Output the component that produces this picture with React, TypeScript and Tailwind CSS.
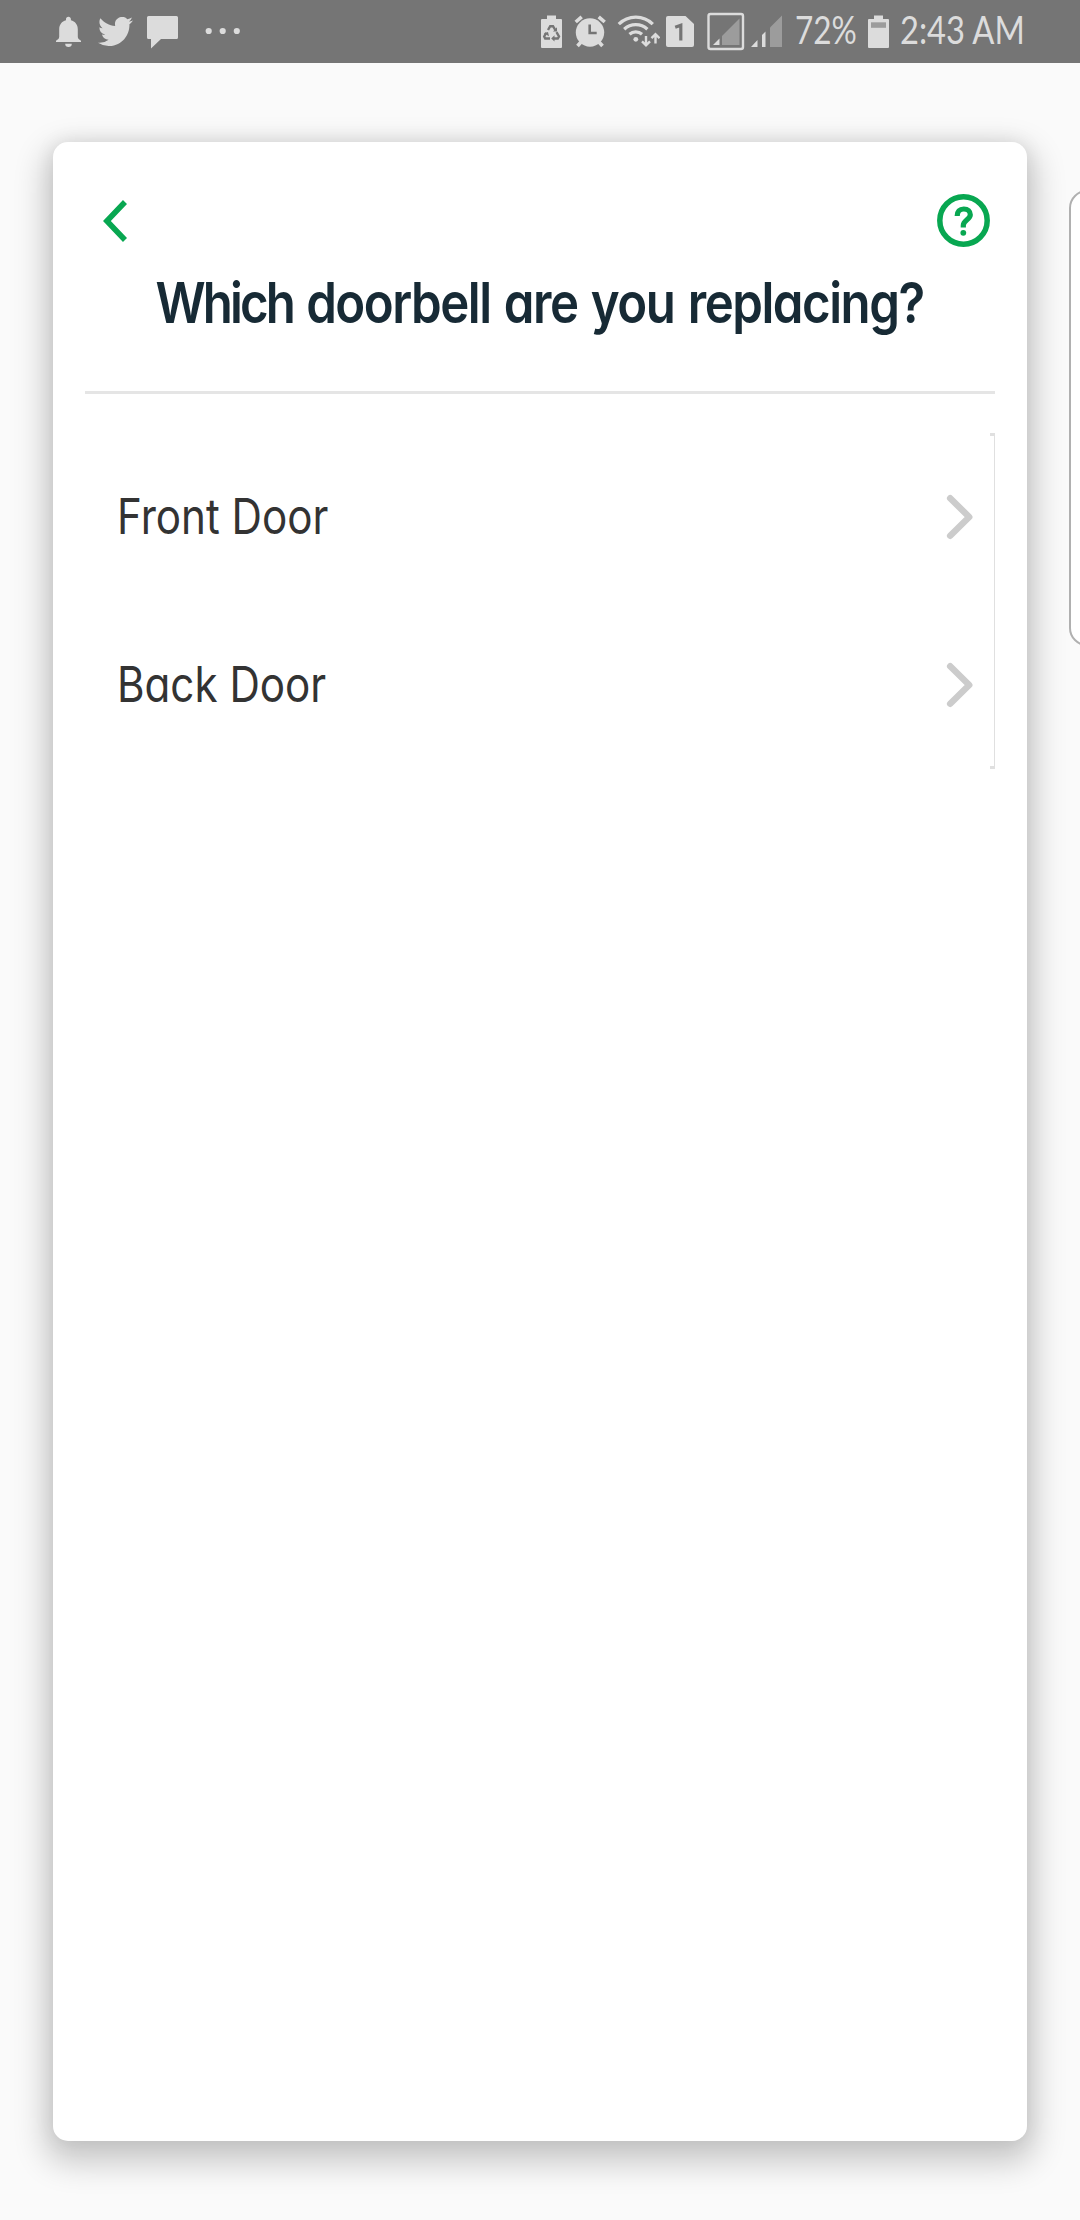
const INTER = "font-['Inter','Liberation_Sans',sans-serif] [font-feature-settings:'cv11']";
const LATO = "font-['Lato','Liberation_Sans',sans-serif]";

function StatusBar() {
  return (
    <header className={`flex h-[63px] w-full items-center bg-[#757575] pl-[56px] text-[#dcdcdc] ${LATO}`}>
      <svg className="h-[63px] w-[25px] shrink-0" viewBox="56 0 25 63" fill="currentColor">
        <path d="M68.400 16.800c-1.500 0-2.400 1-2.400 2.300v1.200c-4.200 1-6.800 4.400-6.800 9v7.500c0 1.600-1.200 2.800-3.200 3.900V42h25v-1.300c-2-1.100-3.200-2.300-3.200-3.900v-7.500c0-4.600-2.700-8-6.900-9v-1.200c0-1.300-1-2.300-2.500-2.300zM65.200 43.800a3.300 3.300 0 0 0 6.600 0z" />
      </svg>
      <svg className="ml-[17px] h-[29px] w-[35px] shrink-0" viewBox="0 2.250 24 19.500" preserveAspectRatio="none" fill="currentColor">
        <path d="M23.953 4.570a10 10 0 01-2.825.775 4.958 4.958 0 002.163-2.723c-.951.555-2.005.959-3.127 1.184a4.920 4.920 0 00-8.384 4.482C7.690 8.095 4.067 6.130 1.640 3.162a4.822 4.822 0 00-.666 2.475c0 1.710.870 3.213 2.188 4.096a4.904 4.904 0 01-2.228-.616v.060a4.923 4.923 0 003.946 4.827 4.996 4.996 0 01-2.212.085 4.936 4.936 0 004.604 3.417 9.867 9.867 0 01-6.102 2.105c-.390 0-.779-.023-1.170-.067a13.995 13.995 0 007.557 2.209c9.053 0 13.998-7.496 13.998-13.985 0-.210 0-.420-.015-.630A9.935 9.935 0 0024 4.590z" />
      </svg>
      <svg className="ml-[14px] h-[63px] w-[31px] shrink-0" viewBox="147 0 31 63" fill="currentColor">
        <path d="M148.500 16h28q1.500 0 1.500 1.500v20q0 1.500-1.500 1.500H161l-10 9.500V39h-2.500q-1.500 0-1.500-1.500v-20q0-1.500 1.500-1.500z" />
      </svg>
      <svg className="ml-[27px] h-[63px] w-[36px] shrink-0" viewBox="205 0 36 63" fill="currentColor">
        <circle cx="208.700" cy="31" r="3.100" />
        <circle cx="222.700" cy="31" r="3.100" />
        <circle cx="236.800" cy="31" r="3.100" />
      </svg>
      <svg className="ml-[300px] h-[63px] w-[21px] shrink-0" viewBox="541 0 21 63">
        <path fill="currentColor" d="M547 15.500h9V19h5q1 0 1 1v27q0 1-1 1h-19q-1 0-1-1V20q0-1 1-1h5z" />
        <g fill="none" stroke="#757575" strokeWidth="2.400">
          <path d="M548 30l2.200-3.800h2.800l2.300 3.800M556.500 32.200l2.500 4.300-1.200 2h-4.300M550 38.500h-4.800l-1-2 2-3.700" />
        </g>
        <path fill="#757575" d="M553 31.500h4v-4.200zM554.500 35.300v6.200l-3.300-3.100zM543.800 33.200l4.200-1.200 1 4.200z" />
      </svg>
      <svg className="ml-[12px] h-[63px] w-[33px] shrink-0" viewBox="574 0 33 63" fill="none" stroke="currentColor">
        <circle cx="590" cy="32.500" r="14.200" fill="currentColor" stroke="none" />
        <path strokeWidth="3.600" d="M575.700 22l6-5.200M604.700 22l-6-5.200M581.500 41.500l-4 4.500M598.500 41.500l4 4.500" />
        <path stroke="#757575" strokeWidth="2.600" d="M589.700 24.500v8.500h7" />
      </svg>
      <svg className="ml-[10px] h-[63px] w-[43px] shrink-0" viewBox="617 0 43 63" fill="none" stroke="currentColor" strokeWidth="3.300">
        <path d="M618.800 24.200a24 24 0 0 1 34 0M624.200 29.200a17 17 0 0 1 23.200 0M629.500 34.200a9.500 9.500 0 0 1 12.500 0" />
        <circle cx="635.800" cy="39.300" r="2.400" fill="currentColor" stroke="none" />
        <path strokeWidth="2.400" d="M646 36v9M642 41.300l4 4 4-4M655.500 43.500v-9M651.500 38.200l4-4 4 4" />
      </svg>
      <svg className="ml-[6px] h-[63px] w-[28px] shrink-0" viewBox="666 0 28 63">
        <path fill="currentColor" d="M668 16h17.500l8.500 8v21q0 2-2 2h-24q-2 0-2-2V18q0-2 2-2z" />
        <path fill="none" stroke="#757575" strokeWidth="3.200" d="M675.200 27.300l5.600-2V40.500" />
      </svg>
      <svg className="ml-[13px] h-[63px] w-[38px] shrink-0" viewBox="707 0 38 63" fill="currentColor">
        <rect x="708.500" y="14" width="34.500" height="35" rx="2" fill="none" stroke="currentColor" strokeWidth="2.400" />
        <path d="M719.500 38.500V45H713z" />
        <path fill="#9c9c9c" d="M739.500 18.500V45H722V36z" />
      </svg>
      <svg className="ml-[5px] h-[63px] w-[32px] shrink-0" viewBox="750 0 32 63" fill="currentColor">
        <path d="M757.500 40v7H751zM762 35l3.500-3.500V47H762z" />
        <path fill="#9c9c9c" d="M770 27.500l12-12V47h-12z" />
      </svg>
      <div className="ml-[13px] w-[62px] shrink-0 pb-[4px]">
        <span className="inline-block origin-left scale-x-[0.83] whitespace-nowrap text-[38px] leading-none">72%</span>
      </div>
      <svg className="ml-[11px] h-[63px] w-[21px] shrink-0" viewBox="868 0 21 63">
        <path fill="currentColor" d="M874 15.500h9V19h5q1 0 1 1v27q0 1-1 1h-19q-1 0-1-1V20q0-1 1-1h5z" />
        <path fill="#9c9c9c" d="M871 22.300h15v5.500h-15z" />
      </svg>
      <div className="ml-[11px] w-[126px] shrink-0 pb-[4px]">
        <span className="inline-block origin-left scale-x-[0.86] whitespace-nowrap text-[38px] leading-none">2:43 AM</span>
      </div>
    </header>
  );
}

function DoorRow({ name }: { name: string }) {
  return (
    <li className="flex h-[168px] items-center justify-between pr-[21px] pb-[1px] pl-[32px]">
      <span className="inline-block origin-left scale-x-[0.86] text-[49px] leading-none whitespace-nowrap text-[#333333]">
        {name}
      </span>
      <svg className="h-[46px] w-[28px]" viewBox="0 0 28 46" fill="none" stroke="#cccccc" strokeWidth="6.500" strokeLinejoin="round" strokeLinecap="round">
        <path d="M4.200 4.200L23.200 23L4.200 41.800" />
      </svg>
    </li>
  );
}

export default function App() {
  return (
    <div className="relative h-[2220px] w-[1080px] overflow-hidden bg-[#fafafa]">
      <StatusBar />
      <main
        className={`mx-[53px] mt-[79px] h-[1999px] rounded-[15px] bg-white px-8 pt-[52px] shadow-[0_14px_32px_8px_rgba(0,0,0,0.2),0_0_20px_rgba(0,0,0,0.08)] ${INTER}`}
      >
        <nav className="flex h-[53px] items-center justify-between pr-[5px] pl-[18px]">
          <button aria-label="Back">
            <svg className="h-[42px] w-[24px]" viewBox="0 0 24 42" fill="none" stroke="#08a751" strokeWidth="5.600">
              <path d="M22 2L3.900 21L22 40" />
            </svg>
          </button>
          <button aria-label="Help">
            <svg className="h-[53px] w-[53px]" viewBox="0 0 53 53" fill="none" stroke="#08a751">
              <circle cx="26.500" cy="26.500" r="23.700" strokeWidth="5.500" />
              <path
                strokeWidth="5.200"
                d="M20.200 22C20.200 17.500 22.600 15 26.800 15C30.900 15 33.300 17.400 33.300 20.700C33.300 25.300 26.300 26.300 26.300 31.500V33.500"
              />
              <circle cx="26.300" cy="38.800" r="2.900" fill="#08a751" stroke="none" />
            </svg>
          </button>
        </nav>
        <h1 className="mt-[22px] flex h-[68px] items-center justify-center text-[56.500px] leading-none font-semibold text-[#172a35]">
          <span className="scale-x-[0.87] tracking-[-1.700px] whitespace-nowrap [word-spacing:2.700px]">
            <span className="tracking-[-3.300px]">Which</span> doorbell are you replacing?
          </span>
        </h1>
        <hr className="mt-[54px] h-[3px] border-0 bg-[#e5e5e5]" />
        <div className="mt-[39px] flex">
          <ul className="min-w-0 flex-1">
            <DoorRow name="Front Door" />
            <DoorRow name="Back Door" />
          </ul>
          <div className="-ml-[5px] flex w-[5px] flex-col items-end">
            <div className="h-[3px] w-[5px] bg-[#e0e0e0]" />
            <div className="w-[1px] flex-1 bg-[#e0e0e0]" />
            <div className="h-[3px] w-[5px] bg-[#e0e0e0]" />
          </div>
        </div>
      </main>
      {/* Edge panel handle that peeks in from the right side of the screen */}
      <div className="absolute top-[190px] left-[1069px] h-[456px] w-[40px] rounded-[18px] border-2 border-[#b0b0b0] bg-white" />
    </div>
  );
}
